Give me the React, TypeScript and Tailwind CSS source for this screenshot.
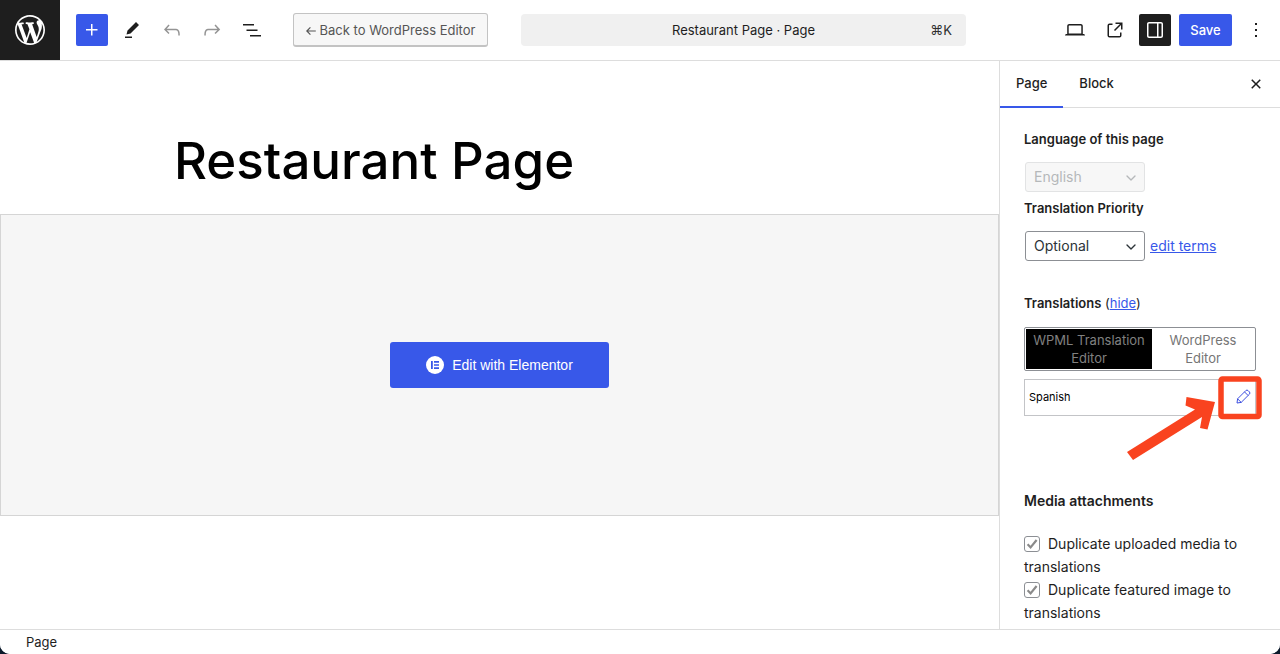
import React, { useState } from 'react';
import { ChevronDown } from 'lucide-react';

const ICONS = {
  plus: 'M11 12.5V17.5H12.5V12.5H17.5V11H12.5V6H11V11H6V12.5H11Z',
  edit: 'm19 7-3-3-8.5 8.5-1 4 4-1L19 7Zm-7 11.5H5V20h7v-1.5Z',
  undo: 'M18.3 11.7c-.6-.6-1.4-.9-2.3-.9H6.7l2.9-3.3-1.1-1-4.5 5L8.5 16l1-1-2.7-2.7H16c.5 0 .9.2 1.3.5 1 1 1 3.4 1 4.5v.3h1.5v-.2c0-1.5 0-4.3-1.5-5.7z',
  redo: 'M15.6 6.5l-1.1 1 2.9 3.3H8c-.9 0-1.7.3-2.3.9-1.4 1.5-1.4 4.2-1.4 5.6v.2h1.5v-.3c0-1.1 0-3.5 1-4.5.3-.3.7-.5 1.3-.5h9.2L14.5 15l1.1 1.1 4.6-4.6-4.6-5z',
  list: 'M3 6h11v1.5H3V6Zm3.5 5.5h11V13h-11v-1.5ZM21 17H10v1.5h11V17Z',
  desktop: 'M20.5 16h-.7V8c0-1.1-.9-2-2-2H6.2c-1.1 0-2 .9-2 2v8h-.7c-.8 0-1.5.7-1.5 1.5h20c0-.8-.7-1.5-1.5-1.5zM5.7 8c0-.3.2-.5.5-.5h11.6c.3 0 .5.2.5.5v7.6H5.7V8z',
  external: 'M19.5 4.5h-7V6h4.44l-5.97 5.97 1.06 1.06L18 7.06v4.44h1.5v-7Zm-13 1a2 2 0 0 0-2 2v10a2 2 0 0 0 2 2h10a2 2 0 0 0 2-2v-3H17v3a.5.5 0 0 1-.5.5h-10a.5.5 0 0 1-.5-.5v-10a.5.5 0 0 1 .5-.5h3V5.5h-3Z',
  drawer: 'M18 4H6c-1.1 0-2 .9-2 2v12c0 1.1.9 2 2 2h12c1.1 0 2-.9 2-2V6c0-1.1-.9-2-2-2zm-4 14.5H6c-.3 0-.5-.2-.5-.5V6c0-.3.2-.5.5-.5h8v13zm4.5-.5c0 .3-.2.5-.5.5h-2.5v-13H18c.3 0 .5.2.5.5v12z',
  more: 'M13 19h-2v-2h2v2zm0-6h-2v-2h2v2zm0-6h-2V5h2v2z',
  close: 'M12 13.06l3.712 3.713 1.061-1.06L13.061 12l3.712-3.712-1.06-1.06L12 10.938 8.288 7.227l-1.061 1.06L10.939 12l-3.712 3.712 1.06 1.061L12 13.061z',
};

function Icon({ name }: { name: keyof typeof ICONS }) {
  return (
    <svg viewBox="0 0 24 24" className="w-6 h-6" fill="currentColor" aria-hidden="true">
      <path d={ICONS[name]} />
    </svg>
  );
}

interface IconButtonProps {
  icon: keyof typeof ICONS;
  label: string;
  className?: string;
  disabled?: boolean;
}

function IconButton({ icon, label, className = '', disabled }: IconButtonProps) {
  return (
    <button
      type="button"
      aria-label={label}
      disabled={disabled}
      className={`w-8 h-8 shrink-0 flex items-center justify-center rounded-xs ${className}`}
    >
      <Icon name={icon} />
    </button>
  );
}

function WordPressLogo() {
  return (
    <svg viewBox="0 0 20 20" className="w-[30px] h-[30px]" fill="currentColor" aria-hidden="true">
      <path d="M20 10c0-5.51-4.49-10-10-10C4.48 0 0 4.49 0 10c0 5.52 4.48 10 10 10 5.51 0 10-4.48 10-10zM7.78 15.37L4.37 6.22c.55-.02 1.17-.08 1.17-.08.5-.06.44-1.13-.06-1.11 0 0-1.45.11-2.37.11-.18 0-.37 0-.58-.01C4.12 2.69 6.87 1.11 10 1.11c2.33 0 4.45.87 6.05 2.34-.68-.11-1.65.39-1.65 1.58 0 .74.45 1.36.9 2.1.35.61.55 1.36.55 2.46 0 1.49-1.4 5-1.4 5l-3.03-8.37c.54-.02.82-.17.82-.17.5-.05.44-1.25-.06-1.22 0 0-1.44.12-2.38.12-.87 0-2.33-.12-2.33-.12-.5-.03-.56 1.2-.06 1.22l.92.08 1.26 3.41zM17.41 10c.24-.64.74-1.87.43-4.25.7 1.29 1.05 2.71 1.05 4.25 0 3.29-1.73 6.24-4.4 7.78.97-2.59 1.94-5.2 2.92-7.78zM6.1 18.09C3.12 16.65 1.11 13.53 1.11 10c0-1.3.23-2.48.72-3.59C3.25 10.3 4.67 14.2 6.1 18.09zm4.03-6.63l2.58 6.98c-.86.29-1.76.45-2.71.45-.79 0-1.57-.11-2.29-.33.81-2.38 1.62-4.74 2.42-7.1z" />
    </svg>
  );
}

function TopBar() {
  return (
    <header className="h-[61px] shrink-0 flex items-center border-b border-[#dddddd] bg-white pr-2">
      <a href="#dashboard" aria-label="View Pages" className="w-15 h-full shrink-0 flex items-center justify-center bg-[#1e1e1e] text-white">
        <WordPressLogo />
      </a>
      <div className="flex items-center gap-2 ml-4">
        <IconButton icon="plus" label="Add block" className="bg-[#3858e9] text-white" />
        <IconButton icon="edit" label="Tools" />
        <IconButton icon="undo" label="Undo" className="text-[#949494]" disabled />
        <IconButton icon="redo" label="Redo" className="text-[#949494]" disabled />
        <IconButton icon="list" label="Document overview" />
      </div>
      <button
        type="button"
        className="ml-[25px] h-[34px] w-[195px] shrink-0 flex items-center justify-center gap-1 rounded-[3px] border border-b-2 border-[#c3c3c3] bg-[#f7f7f7] pt-0.5 text-[13px] text-[#555555]"
      >
        <svg viewBox="0 0 10 10" className="w-[10px] h-[10px]" fill="none" stroke="currentColor" strokeWidth="1.2" aria-hidden="true">
          <path d="M9.8 5H.8M4.4 1.4.8 5l3.6 3.6" />
        </svg>
        Back to WordPress Editor
      </button>
      <button type="button" className="flex-1 min-w-0 h-8 ml-[33px] mr-[93px] px-3.5 pt-0.5 grid grid-cols-[1fr_auto_1fr] items-center rounded bg-[#f0f0f0] text-[13px]">
        <span className="col-start-2">Restaurant Page · Page</span>
        <span className="text-right text-[#2f2f2f]">⌘K</span>
      </button>
      <div className="flex items-center gap-2">
        <IconButton icon="desktop" label="View" />
        <IconButton icon="external" label="View page" />
        <IconButton icon="drawer" label="Settings" className="bg-[#1e1e1e] text-white" />
        <button type="button" className="h-8 w-[53px] rounded-xs bg-[#3858e9] pt-px text-[13px] font-medium text-white">
          Save
        </button>
        <IconButton icon="more" label="Options" />
      </div>
    </header>
  );
}

function Canvas() {
  return (
    <main className="flex-1 min-w-0 overflow-hidden">
      <h1 className="pt-16 pb-[17px] pl-[174px] text-[51px] leading-[72px] font-medium text-black">Restaurant Page</h1>
      <div className="h-[302px] flex items-center justify-center border border-[#d5d5d5] bg-[#f6f6f6]">
        <button
          type="button"
          className="w-[219px] h-[46px] flex items-center justify-center gap-2 rounded-[3px] bg-[#3858e9] font-['Liberation_Sans',sans-serif] text-sm text-white"
        >
          <svg viewBox="0 0 18 18" className="w-[18px] h-[18px]" aria-hidden="true">
            <circle cx="9" cy="9" r="9" fill="#fff" />
            <path d="M5 5h1.8v8H5zM8 5h5v1.7H8zM8 8.150h5v1.7H8zM8 11.300h5v1.7H8z" fill="#3858e9" />
          </svg>
          Edit with Elementor
        </button>
      </div>
    </main>
  );
}

interface SelectProps {
  id: string;
  value: string;
  disabled?: boolean;
}

function Select({ id, value, disabled }: SelectProps) {
  return (
    <div className={`relative w-[120px] ml-px ${disabled ? 'text-[#b5b8ba]' : 'text-[#2c3338]'}`}>
      <select
        id={id}
        defaultValue={value}
        disabled={disabled}
        className="block w-full h-[30px] pl-2 pr-6 appearance-none rounded-[3px] border border-[#8c8f94] bg-white text-sm disabled:border-[#e2e3e4] disabled:bg-[#f7f7f7] disabled:opacity-100"
      >
        <option>{value}</option>
      </select>
      <ChevronDown size={16} className="absolute right-[6px] top-2 pointer-events-none" />
    </div>
  );
}

function MediaOption({ children }: { children: React.ReactNode }) {
  return (
    <label className="block">
      <span className="relative inline-block w-4 h-4 mr-2 align-[-3px]">
        <input type="checkbox" defaultChecked disabled className="peer block w-4 h-4 appearance-none rounded-[3px] border border-[#8c8f94] bg-white" />
        <svg viewBox="0 0 16 16" className="absolute inset-0 hidden peer-checked:block" fill="none" stroke="#8a8a8a" strokeWidth="2.2" aria-hidden="true">
          <path d="M3.6 8.2 6.6 11.4 12.6 4" />
        </svg>
      </span>
      {children}
    </label>
  );
}

function PencilIcon() {
  return (
    <svg viewBox="0 0 15 15" className="w-[15px] h-[15px]" fill="none" stroke="currentColor" strokeLinejoin="round" aria-hidden="true">
      <path d="M1 14 1.600 9.800 9.900 1.500Q11 .6 12 1.500L13.500 3Q14.400 4 13.500 5.100L5.200 13.400ZM1.600 9.800 5.200 13.400M8.500 2.900 12.100 6.500" />
    </svg>
  );
}

// Red box around the pencil with an arrow pointing at it
function Callout() {
  return (
    <svg viewBox="0 0 140 90" className="absolute left-[100px] -top-[5px] w-[140px] h-[90px] pointer-events-none" fill="none" aria-hidden="true">
      <rect x="97" y="5" width="38" height="37.5" rx="1.5" stroke="#f9431f" strokeWidth="5.5" />
      <path d="M3 78 71 35.500 61.500 31.500 62.500 23 91 28 83.500 55.500 76 54 78 43 9 86Z" fill="#f9431f" />
    </svg>
  );
}

function LanguagePanel() {
  const [open, setOpen] = useState(true);

  return (
    <div className="p-6 pt-[23px] text-[13px]">
      <label htmlFor="page-language" className="block leading-4 font-semibold">Language of this page</label>
      <div className="mt-[15px]">
        <Select id="page-language" value="English" disabled />
      </div>
      <label htmlFor="priority" className="block mt-2 leading-4 font-semibold">Translation Priority</label>
      <div className="mt-[15px] flex items-center gap-[5px]">
        <Select id="priority" value="Optional" />
        <a href="#terms" className="text-sm text-[#3858e9] underline">edit terms</a>
      </div>

      <div className="mt-[34px] leading-4">
        <strong className="font-semibold">Translations</strong> (
        <a
          href="#translations"
          className="text-[#3858e9] underline"
          onClick={(e) => {
            e.preventDefault();
            setOpen(!open);
          }}
        >
          {open ? 'hide' : 'show'}
        </a>
        )
      </div>
      {open && (
        <>
          <div className="mt-4 flex rounded-xs border border-[#8c8f94] p-px leading-[18px] text-[#757575]">
            <button type="button" disabled className="w-[126px] h-[40px] bg-black text-[#808080]">
              WPML Translation Editor
            </button>
            <button type="button" disabled className="flex-1 px-4">
              WordPress Editor
            </button>
          </div>
          <div className="relative mt-2">
            <table className="w-full border border-[#c3c4c7] text-[11px]">
              <tbody>
                <tr className="h-[36px]">
                  <th scope="row" className="pl-1 text-left font-normal text-black">Spanish</th>
                  <td className="w-5 pb-0.5">
                    <a href="#edit-spanish" aria-label="Edit the Spanish translation" className="block text-[#3d4fe0]">
                      <PencilIcon />
                    </a>
                  </td>
                </tr>
              </tbody>
            </table>
            <Callout />
          </div>
        </>
      )}

      <h2 className="mt-[75px] leading-5 text-sm font-semibold">Media attachments</h2>
      <div className="mt-[21px] text-sm leading-[23px]">
        <MediaOption>Duplicate uploaded media to translations</MediaOption>
        <MediaOption>Duplicate featured image to translations</MediaOption>
      </div>
    </div>
  );
}

function Sidebar() {
  return (
    <aside className="w-[281px] shrink-0 flex flex-col border-l border-[#dddddd] bg-white">
      <div className="h-[47px] shrink-0 flex items-center border-b border-[#dddddd] pr-2 text-[13px] font-medium">
        <button type="button" className="h-[47px] px-4 pt-0.5 border-b-2 border-[#3858e9]">Page</button>
        <button type="button" className="h-[47px] px-4 pt-0.5 border-b-2 border-transparent">Block</button>
        <IconButton icon="close" label="Close Settings" className="ml-auto" />
      </div>
      <div className="flex-1 min-h-0 overflow-hidden">
        <LanguagePanel />
      </div>
    </aside>
  );
}

export default function App() {
  return (
    <div className="h-screen bg-[#0c1a2b] font-[Inter,sans-serif] text-[#1e1e1e]">
      <div className="h-full flex flex-col overflow-hidden rounded-b-[10px] bg-white">
        <TopBar />
        <div className="flex-1 min-h-0 flex">
          <Canvas />
          <Sidebar />
        </div>
        <footer className="h-[25px] shrink-0 flex items-center border-t border-[#dddddd] bg-white px-[26px] pt-0.5 text-[13px]">
          Page
        </footer>
      </div>
    </div>
  );
}
